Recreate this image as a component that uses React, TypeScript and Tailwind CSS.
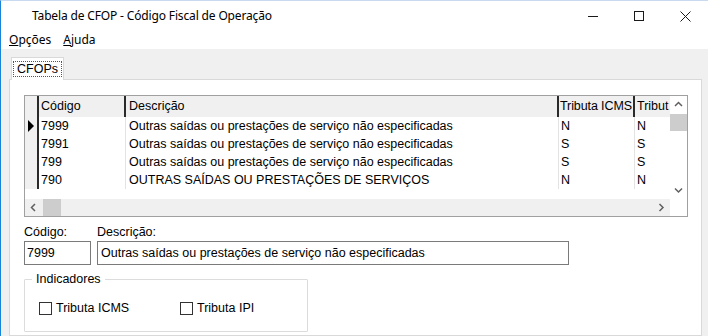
import React from "react";

const rows = [
  { code: "7999", desc: "Outras saídas ou prestações de serviço não especificadas", icms: "N", ipi: "N" },
  { code: "7991", desc: "Outras saídas ou prestações de serviço não especificadas", icms: "S", ipi: "S" },
  { code: "799", desc: "Outras saídas ou prestações de serviço não especificadas", icms: "S", ipi: "S" },
  { code: "790", desc: "OUTRAS SAÍDAS OU PRESTAÇÕES DE SERVIÇOS", icms: "N", ipi: "N" },
];

const Chevron = ({ dir }: { dir: "up" | "down" | "left" | "right" }) => {
  const d = {
    up: "M1 5 L4.5 1.5 L8 5",
    down: "M1 1.5 L4.5 5 L8 1.5",
    left: "M5 1 L1.5 4.5 L5 8",
    right: "M1.5 1 L5 4.5 L1.5 8",
  }[dir];
  const vertical = dir === "up" || dir === "down";
  return (
    <svg width={vertical ? 9 : 7} height={vertical ? 7 : 9} viewBox={vertical ? "0 0 9 7" : "0 0 7 9"}>
      <path d={d} fill="none" stroke="#606060" strokeWidth="1.5" />
    </svg>
  );
};

const Checkbox = ({ label, className = "" }: { label: string; className?: string }) => (
  <div className={`flex items-center gap-[4px] h-[13px] ${className}`}>
    <div className="w-[13px] h-[13px] border border-[#333333] bg-white shrink-0" />
    <span>{label}</span>
  </div>
);

export default function App() {
  const sans = { fontFamily: '"Liberation Sans", Arial, sans-serif' };
  return (
    <div
      className="w-[708px] h-[336px] overflow-hidden flex flex-col bg-white border-l border-[#1883d7] border-t border-t-[#c9daf0] text-black"
      style={{ fontFamily: '"Noto Sans", "Open Sans", sans-serif' }}
    >
      {/* title bar */}
      <div className="h-[30px] flex items-center shrink-0">
        <span className="pl-[31px] text-[12px] tracking-[-0.15px] flex-1">Tabela de CFOP - Código Fiscal de Operação</span>
        <div className="flex h-full">
          <div className="w-[46px] flex items-center justify-center">
            <div className="w-[10px] h-px bg-[#1a1a1a]" />
          </div>
          <div className="w-[46px] flex items-center justify-center">
            <div className="w-[10px] h-[10px] border border-[#1a1a1a]" />
          </div>
          <div className="w-[46px] flex items-center justify-center">
            <svg width="11" height="11" viewBox="0 0 11 11">
              <path d="M0.5 0.5 L10.5 10.5 M10.5 0.5 L0.5 10.5" stroke="#1a1a1a" strokeWidth="1" />
            </svg>
          </div>
        </div>
      </div>

      {/* menu bar */}
      <div className="h-[18px] flex items-center gap-[12px] pl-[8px] text-[12px] shrink-0">
        <span><span className="underline">O</span>pções</span>
        <span><span className="underline">A</span>juda</span>
      </div>

      {/* body */}
      <div className="flex-1 bg-[#f0f0f0] pt-[8px] pl-[8px] pr-[6px] flex flex-col min-h-0" style={sans}>
        <div className="flex">
          <div className="ml-[2px] w-[53px] h-[23px] border border-b-0 border-[#d9d9d9] bg-white -mb-px relative z-10 flex items-center justify-center text-[12.5px]">
            <span className="border border-dotted border-[#555] px-[3px] leading-[14px]">CFOPs</span>
          </div>
        </div>

        <div className="flex-1 border border-[#d9d9d9] bg-white pt-[15px] pl-[14px] text-[12.5px]">
          {/* grid */}
          <div className="w-[664px] h-[122px] border border-[#a0a0a0] flex flex-col">
            <div className="flex h-[103px]">
              <div className="w-[645px] flex flex-col">
                <div className="flex h-[21px] bg-[#f0f0f0] leading-[21px] whitespace-nowrap">
                  <div className="w-[14px] border-r-2 border-[#2a2a2a]" />
                  <div className="w-[87px] pl-[2px] border-r-2 border-[#2a2a2a]">Código</div>
                  <div className="w-[433px] pl-[3px] border-r-2 border-[#2a2a2a]">Descrição</div>
                  <div className="w-[76px] pl-[1px] border-r-2 border-[#2a2a2a] tracking-[-0.1px]">Tributa ICMS</div>
                  <div className="w-[35px] pl-[2px]">Tribut</div>
                </div>
                {rows.map((r, i) => (
                  <div key={r.code} className="flex h-[18px] leading-[18px]">
                    <div className="w-[14px] bg-[#f0f0f0] border-r-2 border-[#2a2a2a] flex items-center pl-[3px]">
                      {i === 0 && (
                        <svg width="6" height="12" viewBox="0 0 6 12">
                          <path d="M0 0 L6 6 L0 12 Z" fill="#000" />
                        </svg>
                      )}
                    </div>
                    <div className="w-[87px] pl-[2px] border-r border-[#e3e3e3]">{r.code}</div>
                    <div className="w-[433px] pl-[3px] border-r border-[#e3e3e3] whitespace-nowrap overflow-hidden">{r.desc}</div>
                    <div className="w-[76px] pl-[2px] border-r border-[#e3e3e3]">{r.icms}</div>
                    <div className="w-[35px] pl-[2px]">{r.ipi}</div>
                  </div>
                ))}
              </div>
              {/* vertical scrollbar */}
              <div className="w-[17px] flex flex-col">
                <div className="h-[17px] flex items-center justify-center"><Chevron dir="up" /></div>
                <div className="flex-1 flex flex-col">
                  <div className="h-[17px] mt-px bg-[#cdcdcd]" />
                </div>
                <div className="h-[17px] flex items-center justify-center"><Chevron dir="down" /></div>
              </div>
            </div>
            {/* horizontal scrollbar */}
            <div className="flex h-[17px]">
              <div className="w-[645px] bg-[#f0f0f0] flex">
                <div className="w-[17px] flex items-center justify-center"><Chevron dir="left" /></div>
                <div className="w-[18px] ml-px bg-[#cdcdcd]" />
                <div className="flex-1" />
                <div className="w-[17px] flex items-center justify-center"><Chevron dir="right" /></div>
              </div>
              <div className="w-[17px] bg-white" />
            </div>
          </div>

          {/* fields */}
          <div className="flex gap-[6px] mt-[8px]">
            <div className="flex flex-col">
              <span className="leading-[15px]">Código:</span>
              <div className="mt-px w-[67px] h-[24px] border border-[#7a7a7a] bg-white flex items-center pl-[2px]">7999</div>
            </div>
            <div className="flex flex-col">
              <span className="leading-[15px]">Descrição:</span>
              <div className="mt-px w-[472px] h-[24px] border border-[#7a7a7a] bg-white flex items-center pl-[3px]">
                Outras saídas ou prestações de serviço não especificadas
              </div>
            </div>
          </div>

          {/* group box */}
          <div className="relative mt-[14px] w-[284px] h-[53px] border border-[#dcdcdc] rounded-[1px] pt-[22px] pl-[14px] flex">
            <span className="absolute -top-[8px] left-[7px] px-[4px] bg-white leading-[15px]">Indicadores</span>
            <Checkbox label="Tributa ICMS" className="w-[141px]" />
            <Checkbox label="Tributa IPI" />
          </div>
        </div>
      </div>
    </div>
  );
}
